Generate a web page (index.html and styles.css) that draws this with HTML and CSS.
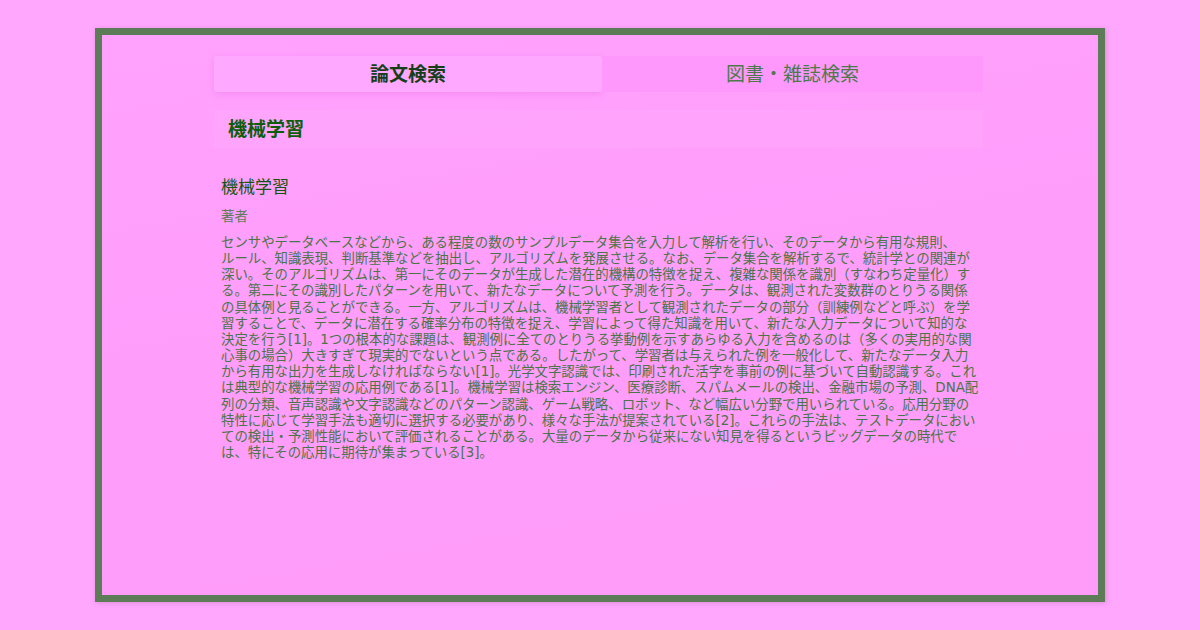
FILE: index.html
```html
<!DOCTYPE html>
<html lang="ja">
<head>
<meta charset="utf-8">
<title>機械学習</title>
<link rel="stylesheet" href="styles.css">
</head>
<body>
<div class="frame">
  <div class="column">
    <div class="tabs">
      <div class="tab tab-active">論文検索</div>
      <div class="tab">図書・雑誌検索</div>
    </div>
    <div class="search">機械学習</div>
    <div class="result">
      <h2 class="result-title">機械学習</h2>
      <div class="result-author">著者</div>
      <p class="result-body">センサやデータベースなどから、ある程度の数のサンプルデータ集合を入力して解析を行い、そのデータから有用な規則、<br>ルール、知識表現、判断基準などを抽出し、アルゴリズムを発展させる。なお、データ集合を解析するで、統計学との関連が<br>深い。そのアルゴリズムは、第一にそのデータが生成した潜在的機構の特徴を捉え、複雑な関係を識別（すなわち定量化）す<br>る。第二にその識別したパターンを用いて、新たなデータについて予測を行う。データは、観測された変数群のとりうる関係<br>の具体例と見ることができる。一方、アルゴリズムは、機械学習者として観測されたデータの部分（訓練例などと呼ぶ）を学<br>習することで、データに潜在する確率分布の特徴を捉え、学習によって得た知識を用いて、新たな入力データについて知的な<br>決定を行う[1]。1つの根本的な課題は、観測例に全てのとりうる挙動例を示すあらゆる入力を含めるのは（多くの実用的な関<br>心事の場合）大きすぎて現実的でないという点である。したがって、学習者は与えられた例を一般化して、新たなデータ入力<br>から有用な出力を生成しなければならない[1]。光学文字認識では、印刷された活字を事前の例に基づいて自動認識する。これ<br>は典型的な機械学習の応用例である[1]。機械学習は検索エンジン、医療診断、スパムメールの検出、金融市場の予測、DNA配<br>列の分類、音声認識や文字認識などのパターン認識、ゲーム戦略、ロボット、など幅広い分野で用いられている。応用分野の<br>特性に応じて学習手法も適切に選択する必要があり、様々な手法が提案されている[2]。これらの手法は、テストデータにおい<br>ての検出・予測性能において評価されることがある。大量のデータから従来にない知見を得るというビッグデータの時代で<br>は、特にその応用に期待が集まっている[3]。</p>
    </div>
  </div>
</div>
</body>
</html>
```

FILE: styles.css
```css
html, body {
  margin: 0;
  padding: 0;
}

body {
  width: 1200px;
  height: 630px;
  background: #ffa7fd;
  font-family: "DejaVu Sans", "Noto Sans CJK JP", sans-serif;
  overflow: hidden;
}

.frame {
  box-sizing: border-box;
  margin: 28px 0 0 95px;
  width: 1010px;
  height: 574px;
  border: 7px solid #5e7b58;
  background: linear-gradient(170deg, #ffa2fd 0%, #ff9dfb 50%, #ff9cfa 100%);
  box-shadow: 1px 1px 5px rgba(120, 60, 120, 0.25);
  padding-top: 21px;
}

.column {
  width: 769px;
  margin-left: 112px;
}

.tabs {
  display: flex;
  height: 36px;
}

.tab {
  flex: 1;
  display: flex;
  align-items: center;
  justify-content: center;
  padding-bottom: 3px;
  font-size: 19px;
  color: #4d7a4a;
  background: #ff98fd;
}

.tab-active {
  flex: 0 0 388px;
  background: #ffa8ff;
  color: #173f17;
  font-weight: bold;
  border-radius: 3px;
  box-shadow: 0 2px 6px rgba(230, 100, 230, 0.35);
}

.search {
  margin-top: 18px;
  height: 38px;
  display: flex;
  align-items: center;
  padding-left: 14px;
  padding-bottom: 4px;
  box-sizing: border-box;
  font-size: 19px;
  font-weight: bold;
  color: #0b5e0b;
  background: rgba(255, 190, 255, 0.14);
}

.result {
  padding: 0 0 0 7px;
  margin-top: 26px;
}

.result-title {
  margin: 0;
  font-size: 17px;
  font-weight: normal;
  line-height: 26px;
  color: #11570f;
}

.result-author {
  margin-top: 7px;
  font-size: 13.4px;
  line-height: 20px;
  color: #5e7d5c;
}

.result-body {
  margin: 8px -20px 0 0;
  font-size: 13.4px;
  line-height: 16.15px;
  color: #4a7548;
  white-space: nowrap;
}
```
